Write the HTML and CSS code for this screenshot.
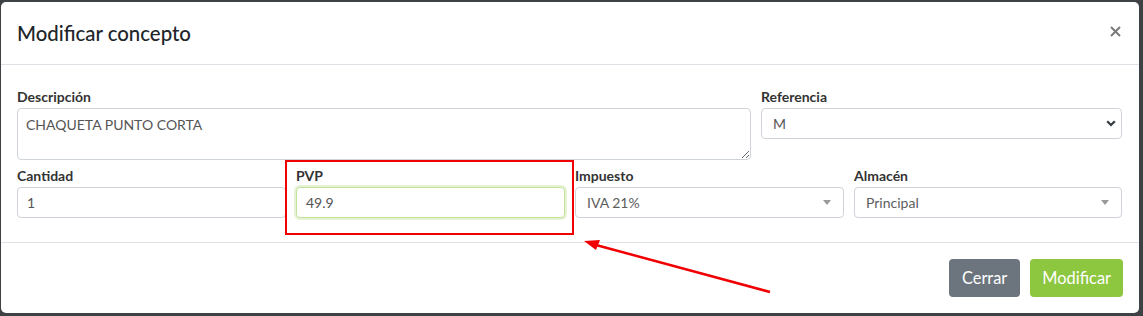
FILE: index.html
```html
<!DOCTYPE html>
<html lang="es">
<head>
<meta charset="utf-8">
<title>Modificar concepto</title>
<link rel="stylesheet" href="styles.css">
</head>
<body>
<div class="backdrop">
  <div class="modal">
    <div class="modal-header">
      <h5 class="modal-title">Modificar concepto</h5>
      <button class="close" type="button" aria-label="Close">
        <svg width="11" height="11" viewBox="0 0 11 11"><path d="M1 1L10 10M10 1L1 10" stroke="#7a7a7a" stroke-width="2"/></svg>
      </button>
    </div>
    <div class="modal-body">
      <div class="row row-top">
        <div class="group">
          <label>Descripción</label>
          <textarea class="control textarea">CHAQUETA PUNTO CORTA</textarea>
        </div>
        <div class="group">
          <label>Referencia</label>
          <div class="select-wrap">
            <select class="control native"><option>M</option></select>
            <svg class="chevron" width="10" height="7" viewBox="0 0 10 7"><path d="M1.2 1.2L5 5L8.8 1.2" fill="none" stroke="#343a40" stroke-width="2.2"/></svg>
          </div>
        </div>
      </div>
      <div class="row row-bottom">
        <div class="group">
          <label>Cantidad</label>
          <input class="control" type="text" value="1">
        </div>
        <div class="group">
          <label>PVP</label>
          <input class="control focused" type="text" value="49.9">
        </div>
        <div class="group">
          <label>Impuesto</label>
          <div class="control select2"><span>IVA 21%</span><span class="caret"></span></div>
        </div>
        <div class="group">
          <label>Almacén</label>
          <div class="control select2"><span>Principal</span><span class="caret"></span></div>
        </div>
      </div>
    </div>
    <div class="modal-footer">
      <button class="btn btn-secondary" type="button">Cerrar</button>
      <button class="btn btn-success" type="button">Modificar</button>
    </div>
    <div class="highlight"></div>
    <svg class="arrow" width="1143" height="316" viewBox="0 0 1143 316">
      <line x1="770" y1="292" x2="596" y2="245" stroke="#f00000" stroke-width="2.5"/>
      <polygon points="584,241 600,240 596,250" fill="#f00000"/>
    </svg>
  </div>
</div>
</body>
</html>
```
FILE: styles.css
```css
* { box-sizing: border-box; }
html, body { margin: 0; padding: 0; }
body {
  width: 1143px;
  height: 316px;
  overflow: hidden;
  background: #3f4244;
  font-family: Lato, "Open Sans", "Liberation Sans", sans-serif;
}
.backdrop {
  padding: 2px 4px 3px 1px;
}
.modal {
  width: 1138px;
  height: 311px;
  background: #fff;
  border-radius: 5px;
  display: flex;
  flex-direction: column;
}
.modal-header {
  display: flex;
  align-items: center;
  justify-content: space-between;
  padding: 16px 18px 16px 16px;
  border-bottom: 1px solid #dee2e6;
  height: 63px;
}
.modal-title {
  margin: 0;
  font-size: 20.4px;
  font-weight: 500;
  line-height: 30px;
  color: #212529;
}
.close {
  border: 0;
  background: none;
  padding: 0;
  width: 11px;
  height: 11px;
  display: flex;
  margin-top: -3px;
}
.modal-body {
  padding: 22px 16px 0 16px;
  height: 178px;
  border-bottom: 1px solid #dee2e6;
}
.row {
  display: grid;
  column-gap: 10px;
}
.row-top {
  grid-template-columns: 734px 361px;
}
.row-bottom {
  grid-template-columns: 269px 269px 269px 268px;
  margin-top: 6px;
}
.group {
  display: flex;
  flex-direction: column;
}
label {
  font-size: 14px;
  font-weight: 700;
  line-height: 20px;
  color: #333;
  margin-bottom: 1px;
}
.control {
  font-family: inherit;
  font-size: 14px;
  color: #555;
  border: 1px solid #ced4da;
  border-radius: 4px;
  background: #fff;
  height: 31px;
  padding: 0 9px;
  outline: none;
}
.textarea {
  height: 52px;
  padding: 6px 8px;
  line-height: 20px;
  resize: vertical;
}
.select-wrap {
  position: relative;
}
.native {
  width: 100%;
  appearance: none;
  -webkit-appearance: none;
  padding-left: 11px;
}
.chevron {
  position: absolute;
  right: 6px;
  top: 12px;
}
.focused {
  border-color: #c2e19a;
  box-shadow: 0 0 0 2px rgba(141, 198, 63, 0.22);
}
.select2 {
  display: flex;
  align-items: center;
  justify-content: space-between;
  padding: 0 12px 0 11px;
  color: #5d5d5d;
}
.caret {
  width: 0;
  height: 0;
  border-left: 4px solid transparent;
  border-right: 4px solid transparent;
  border-top: 5px solid #999;
}
.modal-footer {
  display: flex;
  justify-content: flex-end;
  align-items: center;
  gap: 10px;
  padding: 16px 16px;
  flex: 1;
}
.btn {
  font-family: inherit;
  font-size: 16.4px;
  line-height: 24px;
  height: 38px;
  padding: 7px 12px;
  border: 0;
  border-radius: 4px;
  color: #fff;
}
.btn-secondary { background: #6c757d; padding: 7px 13px; }
.btn-success { background: #8dc63f; }
.highlight {
  position: absolute;
  left: 285px;
  top: 160px;
  width: 289px;
  height: 75px;
  border: 2.5px solid #f00000;
}
.arrow {
  position: absolute;
  left: 0;
  top: 0;
  pointer-events: none;
}
```
